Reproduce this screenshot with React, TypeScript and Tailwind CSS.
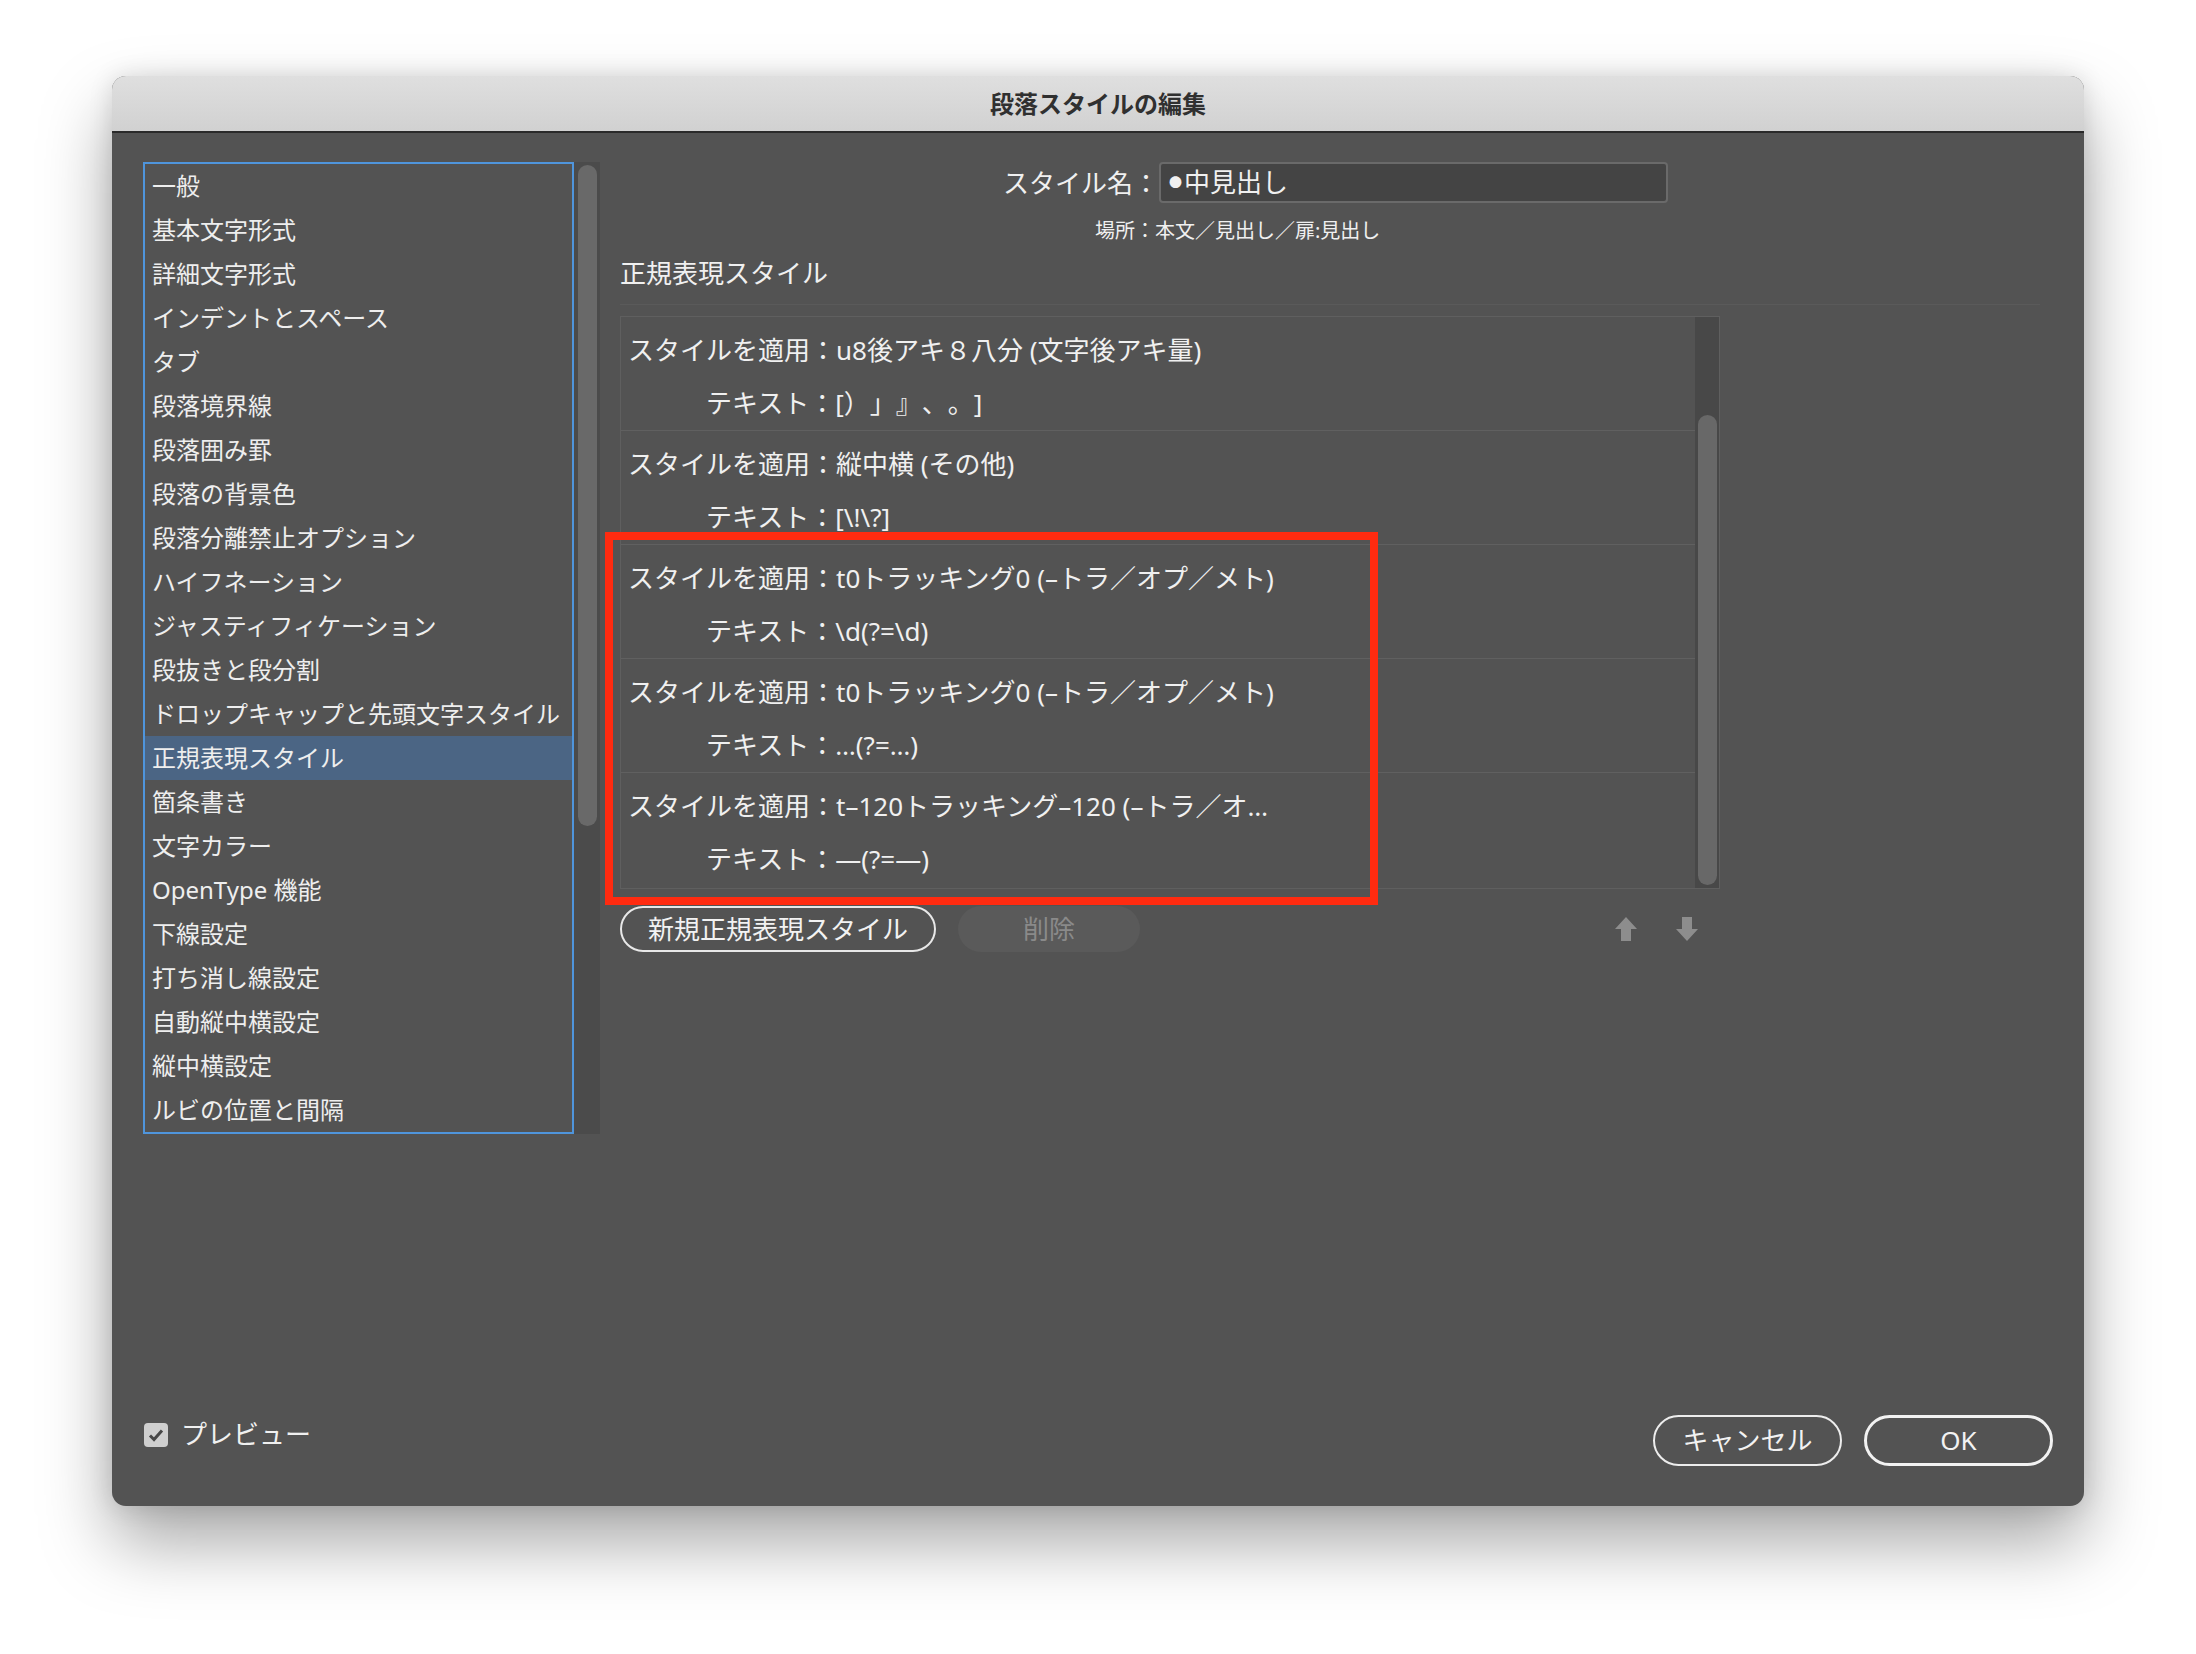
const sections = [
  "一般",
  "基本文字形式",
  "詳細文字形式",
  "インデントとスペース",
  "タブ",
  "段落境界線",
  "段落囲み罫",
  "段落の背景色",
  "段落分離禁止オプション",
  "ハイフネーション",
  "ジャスティフィケーション",
  "段抜きと段分割",
  "ドロップキャップと先頭文字スタイル",
  "正規表現スタイル",
  "箇条書き",
  "文字カラー",
  "OpenType 機能",
  "下線設定",
  "打ち消し線設定",
  "自動縦中横設定",
  "縦中横設定",
  "ルビの位置と間隔",
];

const rules = [
  { style: "u8後アキ８八分 (文字後アキ量)", text: "[）」』、。]" },
  { style: "縦中横 (その他)", text: "[\\!\\?]" },
  { style: "t0トラッキング0 (–トラ／オプ／メト)", text: "\\d(?=\\d)" },
  { style: "t0トラッキング0 (–トラ／オプ／メト)", text: "…(?=…)" },
  { style: "t–120トラッキング–120 (–トラ／オ…", text: "—(?=—)" },
];

function Arrow({ down }: { down?: boolean }) {
  return (
    <svg width="22" height="24" viewBox="0 0 22 24" className={down ? "rotate-180" : ""}>
      <path d="M11 0 L22 12 L16 12 L16 24 L6 24 L6 12 L0 12 Z" fill="#8d8d8d" />
    </svg>
  );
}

function SectionList() {
  return (
    <div className="flex">
      <ul className="w-[431px] border-2 border-[#4f95dc]">
        {sections.map((s) => (
          <li
            key={s}
            className={`flex h-[44px] items-center pl-[7px] text-[24px] text-[#eeeeee] ${
              s === "正規表現スタイル" ? "bg-[#4b6584]" : ""
            }`}
          >
            {s}
          </li>
        ))}
      </ul>
      <div className="w-[26px] bg-[#4b4b4b] pt-[3px]">
        <div className="mx-auto h-[661px] w-[19px] rounded-full bg-[#696969]" />
      </div>
    </div>
  );
}

function RuleList() {
  return (
    <div className="flex h-[573px] w-[1100px] border border-[#5f5f5f]">
      <div className="flex flex-1 flex-col">
        {rules.map((r, i) => (
          <div
            key={i}
            className={`h-[114px] pl-[7px] text-[26px] text-[#f0f0f0] ${
              i < rules.length - 1 ? "border-b border-[#606060]" : ""
            }`}
          >
            <div className="mt-[13px] h-[40px] leading-[40px] whitespace-nowrap">
              スタイルを適用：{r.style}
            </div>
            <div className="mt-[13px] h-[40px] pl-[78px] leading-[40px] whitespace-nowrap">
              テキスト：{r.text}
            </div>
          </div>
        ))}
      </div>
      <div className="w-[24px] bg-[#484848] pt-[98px]">
        <div className="mx-auto h-[470px] w-[19px] rounded-full bg-[#686868]" />
      </div>
    </div>
  );
}

export default function App() {
  return (
    <div className="min-h-[1654px] w-full bg-white pl-[112px] pt-[76px] font-['Noto_Sans','Noto_Sans_CJK_JP',sans-serif] [text-spacing-trim:space-all]">
      <div className="relative flex h-[1430px] w-[1972px] flex-col overflow-hidden rounded-[14px] bg-[#535353] shadow-[0_36px_70px_rgba(0,0,0,0.35),0_0_24px_rgba(0,0,0,0.12)]">
        <div className="flex h-[57px] items-center justify-center border-b-2 border-[#2a2a2a] bg-gradient-to-b from-[#dfdfdf] to-[#d1d1d1] text-[24px] font-bold text-[#303030]">
          段落スタイルの編集
        </div>

        <div className="flex flex-1 flex-col">
          <div className="flex pl-[31px] pt-[29px]">
            <SectionList />

            <div className="ml-[20px] flex w-[1100px] flex-col text-[#f0f0f0]">
              <div className="flex h-[41px] items-center pl-[383px]">
                <span className="text-[26px] leading-none">スタイル名：</span>
                <div className="flex h-[41px] w-[509px] items-center rounded-[4px] border-2 border-[#6a6a6a] bg-[#444444] pl-[8px] text-[26px]">
                  <span className="mr-[2px] text-[13px] leading-none">●</span>
                  中見出し
                </div>
              </div>
              <div className="mt-[14px] pl-[475px] text-[20px] leading-[28px]">
                場所：本文／見出し／扉:見出し
              </div>
              <div className="mt-[11px] text-[26px] leading-[34px]">正規表現スタイル</div>
              <div className="mt-[14px] h-px w-[1420px] bg-[#5a5a5a]" />
              <div className="mt-[11px]">
                <RuleList />
              </div>
              <div className="mt-[17px] flex items-center">
                <button className="h-[46px] w-[316px] rounded-full border-2 border-[#e8e8e8] text-[26px] text-[#f2f2f2]">
                  新規正規表現スタイル
                </button>
                <button className="ml-[22px] h-[46px] w-[182px] rounded-full bg-[#5a5a5a] text-[26px] text-[#8a8a8a]">
                  削除
                </button>
                <div className="ml-auto mr-[22px] flex items-center gap-[39px]">
                  <Arrow />
                  <Arrow down />
                </div>
              </div>
            </div>
          </div>

          <div className="mt-auto flex items-center justify-between pb-[40px] pl-[32px] pr-[31px]">
            <label className="mb-[12px] flex items-center gap-[13px] text-[26px] text-[#f0f0f0]">
              <span className="flex h-[24px] w-[24px] items-center justify-center rounded-[4px] bg-[#cfcfcf]">
                <svg width="16" height="14" viewBox="0 0 16 14">
                  <path d="M2 7.5 L6 11.5 L14 2.5" fill="none" stroke="#474747" strokeWidth="3" />
                </svg>
              </span>
              プレビュー
            </label>
            <div className="flex items-center gap-[22px]">
              <button className="h-[51px] w-[189px] rounded-full border-2 border-[#ededed] text-[26px] text-[#f2f2f2]">
                キャンセル
              </button>
              <button className="h-[51px] w-[189px] rounded-full border-[3px] border-[#f2f2f2] text-[26px] text-[#f2f2f2]">
                OK
              </button>
            </div>
          </div>
        </div>

        {/* annotation frame drawn over the dialog */}
        <div className="pointer-events-none absolute left-[493px] top-[456px] h-[373px] w-[773px] border-[8px] border-[#ff2b10]" />
      </div>
    </div>
  );
}
